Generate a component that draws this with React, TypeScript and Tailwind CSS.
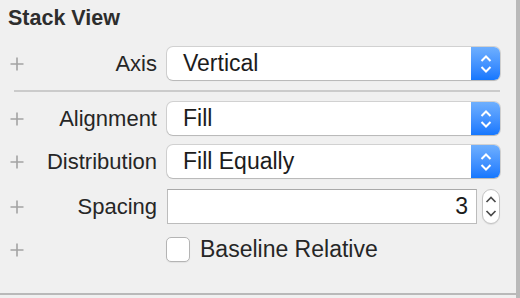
const FONT = "font-['Liberation_Sans','Helvetica_Neue',Arial,sans-serif]";

function Plus() {
  return (
    <div className="w-[34px] flex justify-center items-center shrink-0">
      <svg width="14" height="14" viewBox="0 0 14 14">
        <path d="M7 0.5v13M0.5 7h13" stroke="#a3a3a3" strokeWidth="1.6" />
      </svg>
    </div>
  );
}

function Label({ text }: { text?: string }) {
  return (
    <div className="w-[123px] shrink-0 text-right text-[22px] text-[#262626] leading-none">
      {text}
    </div>
  );
}

function Chevron({ up, color, w = 2 }: { up?: boolean; color: string; w?: number }) {
  return (
    <svg width="12" height="7" viewBox="0 0 12 7">
      <path d={up ? "M1.5 6L6 1.5L10.5 6" : "M1.5 1L6 5.5L10.5 1"} fill="none" stroke={color} strokeWidth={w} />
    </svg>
  );
}

function PopUp({ value }: { value: string }) {
  return (
    <div className="ml-[10px] w-[333px] h-[33px] flex rounded-[6px] bg-white shadow-[0_0_0_1px_rgba(0,0,0,0.13),0_1px_1px_rgba(0,0,0,0.12)] overflow-hidden">
      <div className="flex-1 flex items-center pl-[16px] text-[23px] text-[#1c1c1c] leading-none">{value}</div>
      <div className="w-[29px] flex flex-col items-center justify-center gap-[4px] bg-linear-to-b from-[#6eaffe] to-[#1477fe]">
        <Chevron up color="#fff" />
        <Chevron color="#fff" />
      </div>
    </div>
  );
}

function Stepper() {
  return (
    <div className="ml-[5px] w-[18px] h-[35px] rounded-[9px] bg-white border border-[#c4c4c4] shadow-[0_1px_1px_rgba(0,0,0,0.08)] flex flex-col items-center justify-center gap-[7px]">
      <Chevron up color="#4a4a4a" w={1.7} />
      <Chevron color="#4a4a4a" w={1.7} />
    </div>
  );
}

export default function App() {
  return (
    <div className={`w-[520px] h-[298px] bg-[#f0f0f0] border-r-4 border-[#b9b9b9] ${FONT}`}>
      <div className="h-[295px] border-b-2 border-[#b9b9b9] flex flex-col">
        <div className="pt-[6px] pl-[8px] h-[31px] text-[21.5px] leading-[25px] font-bold text-[#2d2d2d]">Stack View</div>

        <div className="mt-[16px] flex items-center">
          <Plus />
          <Label text="Axis" />
          <PopUp value="Vertical" />
        </div>

        <div className="mt-[10px] ml-[14px] w-[486px] h-[2px] bg-[#cbcbcb]" />

        <div className="mt-[10px] flex items-center">
          <Plus />
          <Label text="Alignment" />
          <PopUp value="Fill" />
        </div>

        <div className="mt-[10px] flex items-center">
          <Plus />
          <Label text="Distribution" />
          <PopUp value="Fill Equally" />
        </div>

        <div className="mt-[11px] flex items-center">
          <Plus />
          <Label text="Spacing" />
          <div className="ml-[10px] w-[310px] h-[35px] bg-white border border-[#bcbcbc] border-t-[#a9a9a9] flex items-center justify-end pr-[8px] text-[23px] text-[#1c1c1c] leading-none">
            3
          </div>
          <Stepper />
        </div>

        <div className="mt-[13px] flex items-center">
          <Plus />
          <Label />
          <div className="ml-[9px] w-[24px] h-[25px] rounded-[5px] bg-white border border-[#b4b4b4] shadow-[0_1px_1px_rgba(0,0,0,0.06)]" />
          <div className="ml-[10px] text-[23px] text-[#262626] leading-none">Baseline Relative</div>
        </div>
      </div>
    </div>
  );
}
